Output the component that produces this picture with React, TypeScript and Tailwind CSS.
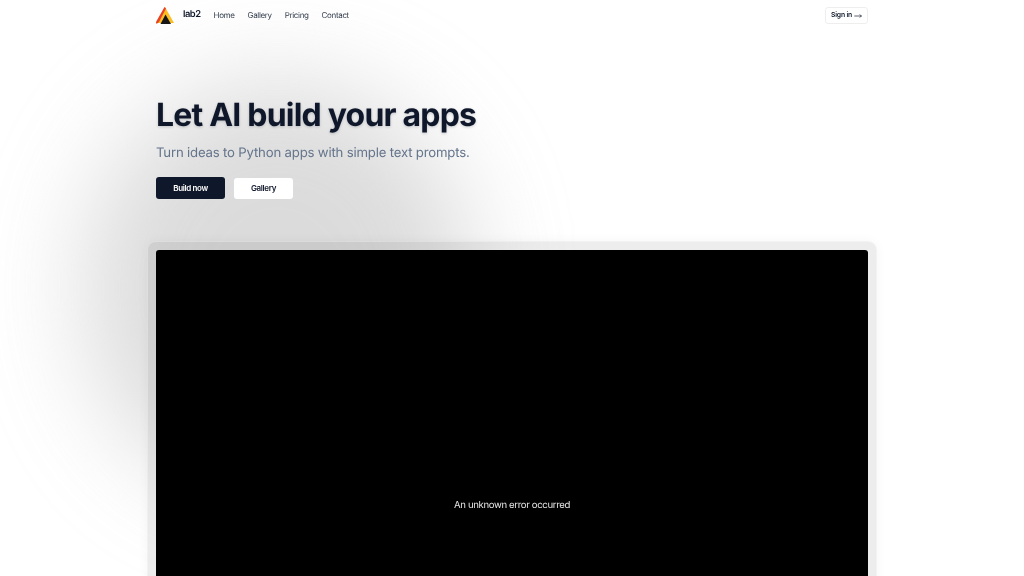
import { MoveRight } from "lucide-react"

const links = ["Home", "Gallery", "Pricing", "Contact"]

function Logo() {
  return (
    <svg width="18" height="17" viewBox="0 0 18 17" aria-hidden>
      <polygon points="9,0 18,16 0,16" fill="#fbbf24" />
      <polygon points="8.5,0 10,1.5 3,15 0.5,17 0,15" fill="#e8412a" />
      <polygon points="9.5,7.5 15,17 4.5,17" fill="#171717" />
    </svg>
  )
}

export default function App() {
  return (
    <div className="relative h-[576px] overflow-hidden bg-white font-['Inter',sans-serif] text-[#0f172a] [text-rendering:geometricPrecision]">
      <div className="absolute left-[85px] top-[80px] h-[415px] w-[385px] rounded-full bg-[#c4c4c4] opacity-60 blur-[50px]" />
      <div className="relative mx-auto w-[712px] [will-change:transform]">
        <nav className="flex h-[30px] items-center justify-between">
          <div className="flex items-center">
            <Logo />
            <span className="ml-[9px] mt-px text-[9.4px] font-semibold tracking-[-0.5px]">lab2</span>
            <div className="ml-[13px] flex gap-[13px] text-[8px] tracking-[-0.35px] text-[#374151]">
              {links.map((l) => (
                <a key={l}>{l}</a>
              ))}
            </div>
          </div>
          <button className="flex h-[17px] w-[43px] items-center justify-center gap-[2px] rounded-[3px] border border-[#eeeeee] bg-white pt-px text-[6.8px] font-semibold tracking-[-0.2px]">
            Sign in
            <MoveRight size={8} />
          </button>
        </nav>
        <section className="pt-[65px]">
          <h1 className="text-[32px] font-bold leading-[40px] tracking-[-0.8px] text-[#0f172a] [text-shadow:0_1px_3px_rgba(15,23,42,0.2)]">
            Let AI build your apps
          </h1>
          <p className="mt-[8px] text-[13.2px] leading-[20px] tracking-[-0.19px] text-[#64748b]">
            Turn ideas to Python apps with simple text prompts.
          </p>
          <div className="mt-[14px] flex gap-[9px] text-[8px] font-semibold tracking-[-0.35px]">
            <button className="h-[22px] w-[69px] rounded-[3px] bg-[#0f172a] text-white">Build now</button>
            <button className="h-[21px] w-[59px] self-center rounded-[3px] bg-white text-[#0f172a]">Gallery</button>
          </div>
        </section>
        <div className="-mx-[9px] mt-[42px] h-[400px] rounded-t-[9px] border border-b-0 border-white/30 bg-black/[0.07] px-[8px] pt-[8px] shadow-[0_0_12px_rgba(0,0,0,0.04)]">
          <div className="h-full rounded-t-[3px] bg-black pt-[249px] text-center text-[9.6px] leading-[14px] tracking-[-0.36px] text-[#e5e5e5]">
            An unknown error occurred
          </div>
        </div>
      </div>
    </div>
  )
}
